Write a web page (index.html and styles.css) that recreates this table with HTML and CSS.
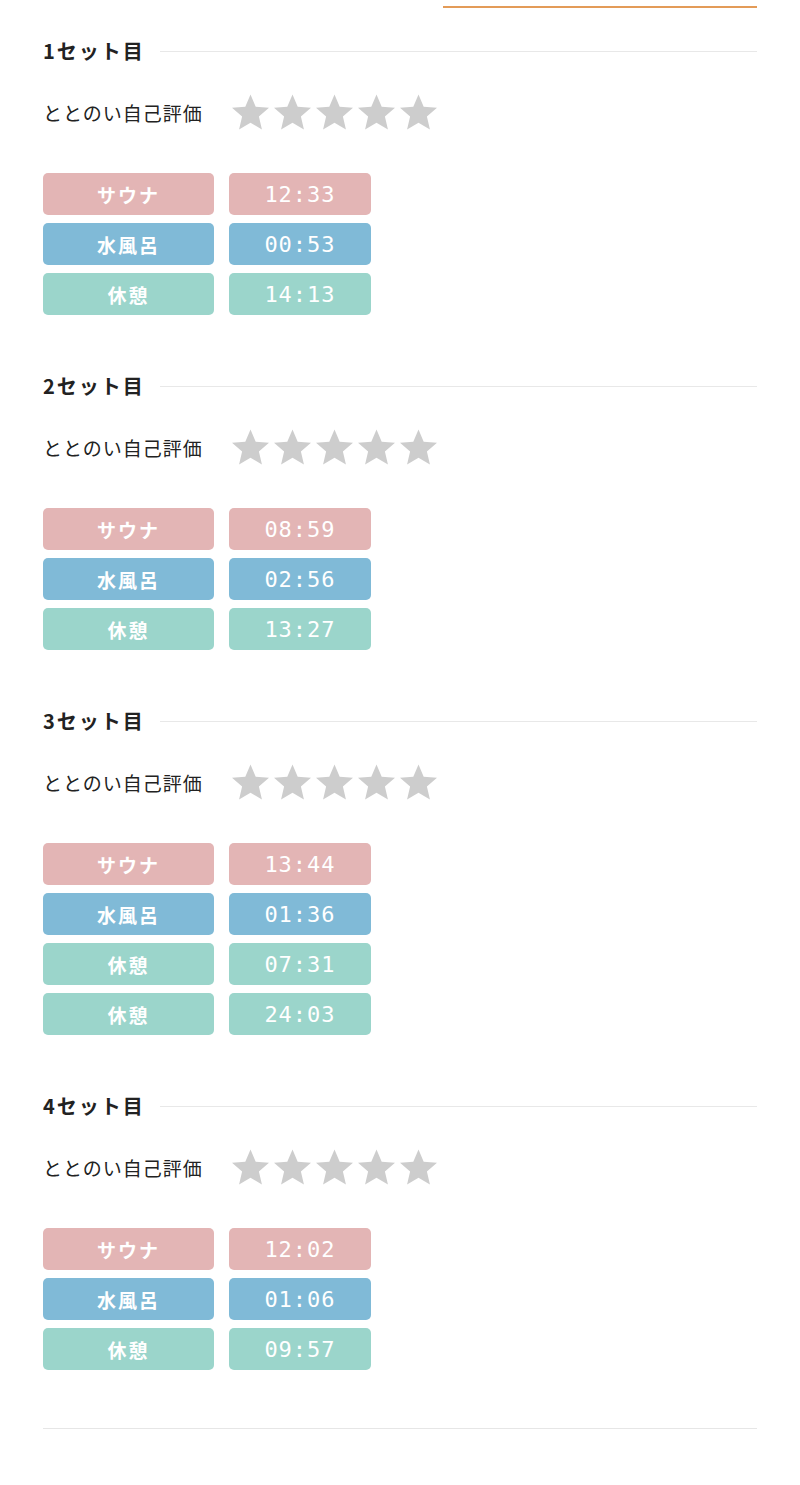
FILE: index.html
```html
<!DOCTYPE html>
<html lang="ja">
<head>
    <meta charset="UTF-8">
    <meta name="viewport" content="width=device-width, initial-scale=1.0">
    <title>セット記録</title>
    <link rel="stylesheet" href="styles.css">
</head>
<body>
    <div class="page">
        <div class="tab-line"></div>

        <section class="set">
            <div class="set-head"><h3>1セット目</h3><span class="rule"></span></div>
            <div class="rating">
                <span class="rating-label">ととのい自己評価</span>
                <div class="stars">
                    <svg viewBox="2 2 20 19"><path d="M12 17.27L18.18 21l-1.64-7.03L22 9.24l-7.19-.61L12 2 9.19 8.63 2 9.24l5.46 4.73L5.82 21z"/></svg>
                    <svg viewBox="2 2 20 19"><path d="M12 17.27L18.18 21l-1.64-7.03L22 9.24l-7.19-.61L12 2 9.19 8.63 2 9.24l5.46 4.73L5.82 21z"/></svg>
                    <svg viewBox="2 2 20 19"><path d="M12 17.27L18.18 21l-1.64-7.03L22 9.24l-7.19-.61L12 2 9.19 8.63 2 9.24l5.46 4.73L5.82 21z"/></svg>
                    <svg viewBox="2 2 20 19"><path d="M12 17.27L18.18 21l-1.64-7.03L22 9.24l-7.19-.61L12 2 9.19 8.63 2 9.24l5.46 4.73L5.82 21z"/></svg>
                    <svg viewBox="2 2 20 19"><path d="M12 17.27L18.18 21l-1.64-7.03L22 9.24l-7.19-.61L12 2 9.19 8.63 2 9.24l5.46 4.73L5.82 21z"/></svg>
                </div>
            </div>
            <div class="times">
                <div class="row sauna"><span class="label">サウナ</span><span class="time">12:33</span></div>
                <div class="row water"><span class="label">水風呂</span><span class="time">00:53</span></div>
                <div class="row rest"><span class="label">休憩</span><span class="time">14:13</span></div>
            </div>
        </section>

        <section class="set">
            <div class="set-head"><h3>2セット目</h3><span class="rule"></span></div>
            <div class="rating">
                <span class="rating-label">ととのい自己評価</span>
                <div class="stars">
                    <svg viewBox="2 2 20 19"><path d="M12 17.27L18.18 21l-1.64-7.03L22 9.24l-7.19-.61L12 2 9.19 8.63 2 9.24l5.46 4.73L5.82 21z"/></svg>
                    <svg viewBox="2 2 20 19"><path d="M12 17.27L18.18 21l-1.64-7.03L22 9.24l-7.19-.61L12 2 9.19 8.63 2 9.24l5.46 4.73L5.82 21z"/></svg>
                    <svg viewBox="2 2 20 19"><path d="M12 17.27L18.18 21l-1.64-7.03L22 9.24l-7.19-.61L12 2 9.19 8.63 2 9.24l5.46 4.73L5.82 21z"/></svg>
                    <svg viewBox="2 2 20 19"><path d="M12 17.27L18.18 21l-1.64-7.03L22 9.24l-7.19-.61L12 2 9.19 8.63 2 9.24l5.46 4.73L5.82 21z"/></svg>
                    <svg viewBox="2 2 20 19"><path d="M12 17.27L18.18 21l-1.64-7.03L22 9.24l-7.19-.61L12 2 9.19 8.63 2 9.24l5.46 4.73L5.82 21z"/></svg>
                </div>
            </div>
            <div class="times">
                <div class="row sauna"><span class="label">サウナ</span><span class="time">08:59</span></div>
                <div class="row water"><span class="label">水風呂</span><span class="time">02:56</span></div>
                <div class="row rest"><span class="label">休憩</span><span class="time">13:27</span></div>
            </div>
        </section>

        <section class="set">
            <div class="set-head"><h3>3セット目</h3><span class="rule"></span></div>
            <div class="rating">
                <span class="rating-label">ととのい自己評価</span>
                <div class="stars">
                    <svg viewBox="2 2 20 19"><path d="M12 17.27L18.18 21l-1.64-7.03L22 9.24l-7.19-.61L12 2 9.19 8.63 2 9.24l5.46 4.73L5.82 21z"/></svg>
                    <svg viewBox="2 2 20 19"><path d="M12 17.27L18.18 21l-1.64-7.03L22 9.24l-7.19-.61L12 2 9.19 8.63 2 9.24l5.46 4.73L5.82 21z"/></svg>
                    <svg viewBox="2 2 20 19"><path d="M12 17.27L18.18 21l-1.64-7.03L22 9.24l-7.19-.61L12 2 9.19 8.63 2 9.24l5.46 4.73L5.82 21z"/></svg>
                    <svg viewBox="2 2 20 19"><path d="M12 17.27L18.18 21l-1.64-7.03L22 9.24l-7.19-.61L12 2 9.19 8.63 2 9.24l5.46 4.73L5.82 21z"/></svg>
                    <svg viewBox="2 2 20 19"><path d="M12 17.27L18.18 21l-1.64-7.03L22 9.24l-7.19-.61L12 2 9.19 8.63 2 9.24l5.46 4.73L5.82 21z"/></svg>
                </div>
            </div>
            <div class="times">
                <div class="row sauna"><span class="label">サウナ</span><span class="time">13:44</span></div>
                <div class="row water"><span class="label">水風呂</span><span class="time">01:36</span></div>
                <div class="row rest"><span class="label">休憩</span><span class="time">07:31</span></div>
                <div class="row rest"><span class="label">休憩</span><span class="time">24:03</span></div>
            </div>
        </section>

        <section class="set">
            <div class="set-head"><h3>4セット目</h3><span class="rule"></span></div>
            <div class="rating">
                <span class="rating-label">ととのい自己評価</span>
                <div class="stars">
                    <svg viewBox="2 2 20 19"><path d="M12 17.27L18.18 21l-1.64-7.03L22 9.24l-7.19-.61L12 2 9.19 8.63 2 9.24l5.46 4.73L5.82 21z"/></svg>
                    <svg viewBox="2 2 20 19"><path d="M12 17.27L18.18 21l-1.64-7.03L22 9.24l-7.19-.61L12 2 9.19 8.63 2 9.24l5.46 4.73L5.82 21z"/></svg>
                    <svg viewBox="2 2 20 19"><path d="M12 17.27L18.18 21l-1.64-7.03L22 9.24l-7.19-.61L12 2 9.19 8.63 2 9.24l5.46 4.73L5.82 21z"/></svg>
                    <svg viewBox="2 2 20 19"><path d="M12 17.27L18.18 21l-1.64-7.03L22 9.24l-7.19-.61L12 2 9.19 8.63 2 9.24l5.46 4.73L5.82 21z"/></svg>
                    <svg viewBox="2 2 20 19"><path d="M12 17.27L18.18 21l-1.64-7.03L22 9.24l-7.19-.61L12 2 9.19 8.63 2 9.24l5.46 4.73L5.82 21z"/></svg>
                </div>
            </div>
            <div class="times">
                <div class="row sauna"><span class="label">サウナ</span><span class="time">12:02</span></div>
                <div class="row water"><span class="label">水風呂</span><span class="time">01:06</span></div>
                <div class="row rest"><span class="label">休憩</span><span class="time">09:57</span></div>
            </div>
        </section>

        <hr class="bottom-rule">
    </div>
</body>
</html>
```

FILE: styles.css
```css
body {
    margin: 0;
    background: #ffffff;
    font-family: 'Noto Sans CJK JP', 'Noto Sans', sans-serif;
    color: #222;
}
.page {
    width: 714px;
    margin: 0 auto;
    padding-top: 6px;
}
.tab-line {
    width: 314px;
    height: 2px;
    margin-left: auto;
    background: #e39b58;
}
.set {
    margin-top: 28px;
    margin-bottom: 56px;
}
.set + .set {
    margin-top: 0;
}
.set-head {
    display: flex;
    align-items: center;
    gap: 15px;
    height: 30px;
}
.set-head h3 {
    margin: 0;
    font-size: 20px;
    font-weight: bold;
    letter-spacing: 2px;
    line-height: 30px;
    color: #222;
}
.rule {
    flex: 1;
    height: 1px;
    background: #e8e8e8;
}
.rating {
    display: flex;
    align-items: center;
    margin-top: 28px;
    height: 36px;
}
.rating-label {
    font-size: 19px;
    letter-spacing: 1px;
    width: 189px;
    color: #222;
}
.stars {
    display: flex;
    gap: 5px;
}
.stars svg {
    width: 37px;
    height: 36px;
    fill: #cdcdcd;
}
.times {
    margin-top: 43px;
    display: flex;
    flex-direction: column;
    gap: 8px;
}
.row {
    display: flex;
    gap: 15px;
}
.row span {
    display: flex;
    align-items: center;
    justify-content: center;
    height: 42px;
    border-radius: 5px;
    color: #fff;
}
.label {
    width: 171px;
    font-size: 19px;
    font-weight: bold;
    letter-spacing: 2px;
}
.time {
    width: 142px;
    font-family: 'DejaVu Sans Mono', monospace;
    font-size: 22px;
    letter-spacing: 1px;
}
.sauna span {
    background: #e3b5b5;
}
.water span {
    background: #80bad7;
}
.rest span {
    background: #9bd5cb;
}
.bottom-rule {
    border: none;
    height: 1px;
    background: #e6e6e6;
    margin: 58px 0 0;
}
```
